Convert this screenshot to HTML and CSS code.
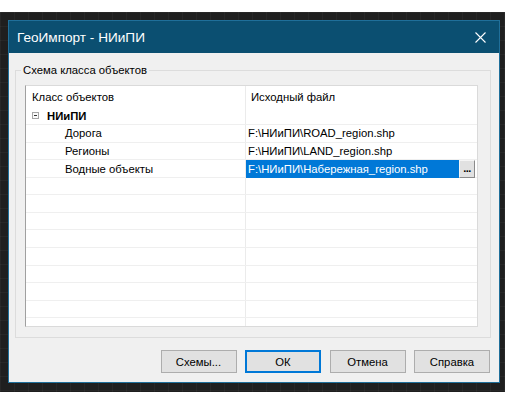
FILE: index.html
```html
<!DOCTYPE html>
<html lang="ru">
<head>
<meta charset="utf-8">
<title>ГеоИмпорт - НИиПИ</title>
<link rel="stylesheet" href="styles.css">
</head>
<body>
<div class="desktop">
  <div class="dialog">
    <div class="titlebar">
      <span class="title">ГеоИмпорт - НИиПИ</span>
      <svg class="close" width="11" height="11" viewBox="0 0 11 11"><path d="M0.5 0.5 L10.5 10.5 M10.5 0.5 L0.5 10.5" stroke="#ffffff" stroke-width="1.1" fill="none"/></svg>
    </div>
    <div class="body">
      <fieldset class="group">
        <legend>Схема класса объектов</legend>
        <div class="grid">
          <div class="row head">
            <div class="c1 hpad">Класс объектов</div>
            <div class="c2 hpad2">Исходный файл</div>
          </div>
          <div class="row">
            <div class="c1 root"><span class="minus"></span><b>НИиПИ</b></div>
            <div class="c2"></div>
          </div>
          <div class="row">
            <div class="c1 child">Дорога</div>
            <div class="c2 val">F:\НИиПИ\ROAD_region.shp</div>
          </div>
          <div class="row">
            <div class="c1 child">Регионы</div>
            <div class="c2 val">F:\НИиПИ\LAND_region.shp</div>
          </div>
          <div class="row">
            <div class="c1 child">Водные объекты</div>
            <div class="c2 val sel"><span class="seltext">F:\НИиПИ\Набережная_region.shp</span><span class="browse">...</span></div>
          </div>
          <div class="row"><div class="c1"></div><div class="c2"></div></div>
          <div class="row"><div class="c1"></div><div class="c2"></div></div>
          <div class="row"><div class="c1"></div><div class="c2"></div></div>
          <div class="row"><div class="c1"></div><div class="c2"></div></div>
          <div class="row"><div class="c1"></div><div class="c2"></div></div>
          <div class="row"><div class="c1"></div><div class="c2"></div></div>
          <div class="row"><div class="c1"></div><div class="c2"></div></div>
          <div class="row"><div class="c1"></div><div class="c2"></div></div>
          <div class="row"><div class="c1"></div><div class="c2"></div></div>
        </div>
      </fieldset>
      <div class="buttons">
        <button class="btn">Схемы...</button>
        <button class="btn default">ОК</button>
        <button class="btn">Отмена</button>
        <button class="btn">Справка</button>
      </div>
    </div>
  </div>
</div>
</body>
</html>
```

FILE: styles.css
```css
html, body {
  margin: 0;
  padding: 0;
  background: #ffffff;
}
body {
  font-family: "Liberation Sans", Arial, sans-serif;
  font-size: 11.3px;
  color: #000;
}
.desktop {
  margin-top: 12px;
  height: 380px;
  box-sizing: border-box;
  padding: 8px 0 0 8px;
  background-color: #1f1f1f;
  background-image:
    linear-gradient(to right, rgba(255,255,255,0.035) 1px, transparent 1px),
    linear-gradient(to bottom, rgba(255,255,255,0.035) 1px, transparent 1px);
  background-size: 14px 14px;
}
.dialog {
  width: 492px;
  height: 363px;
  box-sizing: border-box;
  border: 1px solid #1f6f9a;
  background: #f0f0f0;
  display: flex;
  flex-direction: column;
}
.titlebar {
  height: 32px;
  flex: none;
  background: #0b4f71;
  display: flex;
  align-items: center;
  padding: 0 13px 0 8px;
}
.title {
  flex: 1;
  color: #ffffff;
  font-size: 13.6px;
}
.close {
  display: block;
}
.body {
  flex: 1;
  padding: 10px 8px 9px 6px;
  display: flex;
  flex-direction: column;
}
.group {
  margin: 0;
  border: 1px solid #dcdcdc;
  padding: 7px 12px 10px 5px;
  height: 275px;
  box-sizing: border-box;
  min-width: 0;
}
.group legend {
  padding: 0 2px;
  line-height: 15px;
  font-size: 11.3px;
}
.grid {
  margin-left: 4px;
  height: 242px;
  box-sizing: border-box;
  background: #ffffff;
  border: 1px solid #dadada;
  border-left-color: #a0a0a0;
  overflow: hidden;
}
.row {
  display: grid;
  grid-template-columns: 220px 229px;
  height: 17.55px;
  box-sizing: border-box;
  border-bottom: 1px solid #efefef;
}
.row.head {
  height: 21.5px;
  border-bottom: none;
}
.row.head + .row {
  height: 17.7px;
}
.c1, .c2 {
  display: flex;
  align-items: center;
  white-space: nowrap;
  overflow: hidden;
}
.c1 {
  border-right: 1px solid #ebebeb;
}
.hpad { padding-left: 6px; }
.hpad2 { padding-left: 5px; }
.root { padding-left: 6px; }
.root b { font-weight: bold; margin-left: 8px; }
.minus {
  width: 7px;
  height: 7px;
  box-sizing: border-box;
  border: 1px solid #a6a6a6;
  position: relative;
  background: #fafafa;
}
.minus::after {
  content: "";
  position: absolute;
  left: 1px;
  top: 2px;
  width: 3px;
  height: 1px;
  background: #333;
}
.child { padding-left: 39px; }
.val { padding-left: 2px; }
.sel {
  padding-left: 0;
  margin-bottom: -1px;
}
.seltext {
  flex: none;
  width: 213px;
  height: 100%;
  box-sizing: border-box;
  padding-left: 2px;
  background: #0078d7;
  color: #ffffff;
  display: flex;
  align-items: center;
}
.browse {
  flex: none;
  width: 16px;
  height: 100%;
  box-sizing: border-box;
  background: #e1e1e1;
  border: 1px solid #f5f5f5;
  border-right-color: #8a8a8a;
  border-bottom-color: #8a8a8a;
  font-size: 11px;
  font-weight: bold;
  display: flex;
  align-items: center;
  justify-content: center;
  padding-bottom: 2px;
  letter-spacing: -0.5px;
}
.buttons {
  margin-top: 12px;
  display: flex;
  justify-content: flex-end;
  gap: 8.5px;
  padding-right: 1px;
}
.btn {
  width: 76px;
  height: 23px;
  box-sizing: border-box;
  margin: 0;
  background: #e1e1e1;
  border: 1px solid #adadad;
  font-family: "Liberation Sans", Arial, sans-serif;
  font-size: 11.3px;
  color: #000;
  padding: 0;
}
.btn.default {
  border: 2px solid #0078d7;
}
```
